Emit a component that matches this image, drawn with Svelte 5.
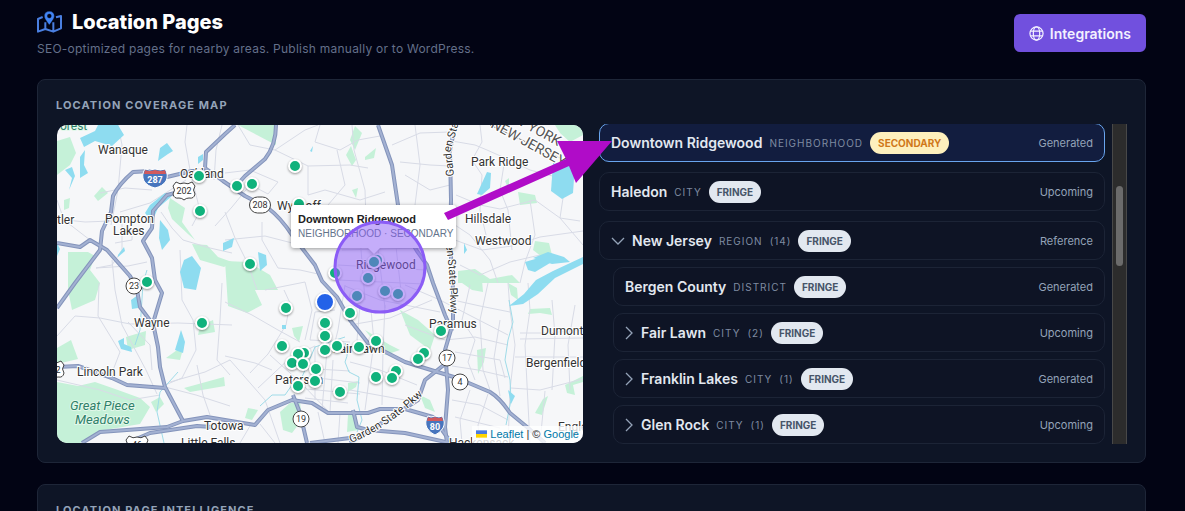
<script>
  const locations = [
    { name: "Downtown Ridgewood", kind: "Neighborhood", tier: "Secondary", status: "Generated", active: true },
    { name: "Haledon", kind: "City", tier: "Fringe", status: "Upcoming" },
    {
      name: "New Jersey",
      kind: "Region",
      count: 14,
      tier: "Fringe",
      status: "Reference",
      open: true,
      children: [
        { name: "Bergen County", kind: "District", tier: "Fringe", status: "Generated" },
        { name: "Fair Lawn", kind: "City", count: 2, tier: "Fringe", status: "Upcoming" },
        { name: "Franklin Lakes", kind: "City", count: 1, tier: "Fringe", status: "Generated" },
        { name: "Glen Rock", kind: "City", count: 1, tier: "Fringe", status: "Upcoming" },
      ],
    },
  ];

  const pins = [
    [295, 166], [199, 176], [237, 186], [252, 184], [200, 211], [299, 204], [250, 264], [147, 282],
    [202, 323], [286, 308], [335, 273], [350, 313], [325, 323], [325, 336], [325, 350], [337, 346],
    [359, 347], [376, 341], [282, 346], [304, 353], [298, 354], [292, 363], [303, 364], [316, 369],
    [315, 381], [298, 386], [340, 392], [376, 377], [396, 371], [392, 378], [424, 353], [418, 359],
    [441, 331], [377, 260], [374, 262], [368, 278], [357, 296], [385, 291], [398, 294],
  ];

  const highways = [
    "M235 125L225 134L206 152L205 168L223 181L245 196L268 208Q281 218 292 235L315 265L322 281L337 297L350 320L368 343L405 362L457 378L490 392Q500 398 510 413L527 427L545 443",
    "M205 171L192 171L167 177L150 171L133 172Q119 184 113 196L111 212L102 231L100 250L75 283L57 308",
    "M276 125Q276 145 265 159L245 176L235 187",
    "M183 191L167 195L153 211L152 228L143 241L152 258L155 280L162 293L153 323L158 347L160 367L165 387L183 421",
    "M57 243L80 247L90 240L107 250L130 276L137 290L140 307L152 323",
    "M57 367L78 366L112 378L127 385L165 388",
    "M82 443L100 432L167 427L183 421L207 417L255 425L268 410L292 400L312 403L328 413L368 413L380 409L405 409L433 417L447 437L452 443",
    "M127 443L150 433L197 426L212 427",
    "M293 395L300 413L307 443",
    "M353 410L357 427L368 430L405 433L450 443",
    "M310 443L358 437",
    "M378 125L392 165L398 205L405 232L417 251L427 265L433 283L445 315L452 331",
    "M455 125L450 151L451 200L450 240L453 290L453 323L445 350L448 390L445 427L447 443",
    "M445 364L425 380L418 400L350 443",
  ];

  const streets = [
    "M118 125L122 145L118 190L111 225",
    "M57 219L85 222L111 221",
    "M100 193L125 188L152 190",
    "M120 212L150 203L186 180",
    "M187 125L185 142L190 170L200 211L192 226",
    "M57 200L64 220L90 240",
    "M161 212L172 228L183 240L210 248L232 253",
    "M115 243L132 240L132 222",
    "M122 224L122 250L112 265L96 268",
    "M96 268L128 266L147 262",
    "M99 283L98 316L120 352L110 378",
    "M112 260L115 290L122 325L146 370L157 394",
    "M57 336L75 316L100 318L130 324L178 323L232 325",
    "M128 322L150 345L152 370",
    "M165 385L182 378L196 350L193 320L182 300L180 250",
    "M165 387L196 395L230 406",
    "M170 382L205 372L230 360",
    "M197 365L203 395L210 415",
    "M222 283L220 320L217 360L230 375",
    "M215 226L232 207L250 185",
    "M225 173L250 170L278 182L268 194L245 182",
    "M238 125L250 145L275 150L305 130L318 125",
    "M275 150L308 166L350 165L368 168",
    "M308 166L308 195L325 190L360 200L385 192",
    "M320 125L315 142L340 150L358 140L380 136",
    "M352 125L354 150L365 190L366 220",
    "M337 150L345 185L328 205",
    "M225 240L265 236L300 245L315 265",
    "M225 212L235 238L248 264L257 290",
    "M262 222L262 240L278 268L300 270L318 274",
    "M225 302L252 315L278 330L300 342",
    "M284 290L290 303L286 325L268 354L250 373",
    "M265 290L305 282L312 310L305 340",
    "M225 356L255 363L272 370",
    "M270 355L300 382L330 413",
    "M258 388L290 358L315 346",
    "M315 346L315 400", "M327 350L322 410", "M333 360L330 412", "M300 368L350 371",
    "M310 377L360 383", "M306 389L360 394", "M305 398L348 403",
    "M345 285L338 330L333 350", "M360 305L357 340L380 352", "M371 310L374 342L365 410",
    "M335 310L315 312L310 340L350 342", "M385 305L383 350L382 405",
    "M350 325L390 318L432 300", "M345 286L380 300L440 312",
    "M350 362L380 370L417 385", "M350 390L405 400",
    "M360 237L365 300", "M376 232L385 308", "M395 238L402 300",
    "M342 250L420 248", "M338 265L425 270", "M338 280L424 284",
    "M400 162L430 165L450 166", "M392 145L420 133L450 132",
    "M452 141L475 145L487 150L505 158L530 170L560 178",
    "M456 195L480 205L500 209L535 200L560 218L580 221",
    "M480 125L482 142L472 160L482 175L480 210L488 243",
    "M505 158L500 190L508 210L512 250",
    "M455 240L482 250L512 246L540 237L583 231",
    "M530 200L535 235L525 262L520 283",
    "M558 181L563 198L560 218L583 245",
    "M455 225L470 235L490 260L498 283",
    "M460 265L480 275L510 262L540 255",
    "M405 325L445 340L475 337L508 345", "M405 285L440 300L508 335",
    "M453 300L480 306L510 312", "M470 285L462 320L475 340L468 362L475 380",
    "M488 283L480 320L483 370L490 390", "M500 320L494 358L500 396",
    "M455 352L500 360L505 378", "M452 366L478 370L508 377",
    "M508 283L510 310L515 345L510 390L508 443",
    "M520 333L545 333L583 330", "M520 339L583 338", "M528 283L530 310L525 345L530 443",
    "M552 300L555 335L552 390", "M515 357L583 357", "M575 305L568 345L570 390",
    "M511 388L540 390L583 379", "M545 391L540 443", "M452 400L480 405L508 420",
    "M470 390L460 420L462 443", "M488 394L478 425L480 443", "M455 417L500 428",
    "M230 360L265 400L280 443", "M318 412L325 443", "M340 413L338 443",
    "M240 443L250 426", "M260 424L275 443", "M57 380L100 390L130 400L160 395",
    "M222 125L216 150L214 180", "M405 175L430 190L450 185", "M415 125L420 165L415 205",
  ];

  const parks = [
    "M57 141L70 137L76 153L70 165L57 175Z",
    "M68 252L88 252L95 256L90 270L100 283L95 300L72 310L68 290Z",
    "M57 382L78 386L95 382L118 390L140 398L150 407L140 424L105 430L80 443L57 443Z",
    "M57 348L71 340L78 359L57 364Z",
    "M170 198L185 208L182 222L195 240L188 234L172 219L168 208Z",
    "M192 244L207 245L218 257L232 262L224 267L200 260Z",
    "M225 261L248 262L270 275L278 290L255 290L262 305L247 313L228 306Z",
    "M238 125L276 125L276 145Z",
    "M166 358L184 345L180 360Z",
    "M94 196L102 187L108 193L98 201Z",
    "M64 200L70 198L69 208L64 210Z",
    "M200 326L213 320L215 332L198 335Z",
    "M184 388L224 377L225 386L190 392Z",
    "M126 337L146 331L145 345L128 350Z",
    "M151 402L160 397L164 404L156 412Z",
    "M355 126L362 133L355 150L350 140Z",
    "M346 155L351 146L356 160L352 166Z",
    "M365 157L376 148L374 158L365 160Z",
    "M352 190L358 188L356 198Z",
    "M518 192L535 195L537 203L520 205Z",
    "M535 241L549 243L553 259L546 260L533 250Z",
    "M505 181L509 178L509 190Z",
    "M458 271L475 269L490 279L512 275L520 283L458 283Z",
    "M400 310L418 320L435 335L430 350L410 335Z",
    "M477 350L486 348L484 362L478 374Z",
    "M530 309L550 308L552 315L540 313L528 314Z",
    "M508 283L517 288L518 300L511 295Z",
    "M565 385L583 376L583 382L573 385L575 395L567 393Z",
    "M543 399L548 396L542 415L535 413Z",
    "M290 403L300 402L302 420L292 433L283 430L280 412Z",
    "M348 415L356 415L358 430L347 432Z",
    "M365 330L390 345L400 350L385 355Z",
    "M248 408L258 410L252 420L245 418Z",
    "M462 283L482 280L483 292L472 290Z",
    "M420 395L430 400L435 412L425 408Z",
    "M555 125L583 125L583 135L570 142L560 133Z",
    "M292 328L303 326L299 342L294 336Z",
    "M348 383L358 381L356 387L348 392Z",
  ];

  const lakes = [
    "M80 138L95 131L98 125L118 125L124 135L112 146L95 141L84 147Z",
    "M65 170L72 167L75 176L69 190L72 178Z",
    "M80 157L85 150L84 165L88 173L80 178Z",
    "M158 161L160 148L167 143L173 151L168 154Z",
    "M150 205L165 193L172 196L158 208L152 222L145 213Z",
    "M160 220L168 230L170 240L162 250L159 238Z",
    "M184 260L192 256L201 268L196 290L184 288L180 272Z",
    "M198 157L203 154L203 160L198 164Z",
    "M118 255L124 247L125 251L118 257Z",
    "M258 252L266 255L267 265L260 271Z",
    "M223 243L234 238L232 247L223 251Z",
    "M118 341L124 338L124 344L131 347L132 352L121 349Z",
    "M181 330L185 342L183 353L175 350Z",
    "M487 172L491 173L490 188L482 195L477 194Z",
    "M553 163L575 164L573 193L562 199L551 191Z",
    "M464 243L467 250L464 254Z",
    "M524 294L536 280L553 271L583 257L583 264L555 278L538 294L523 304L509 306Z",
    "M57 243L60 249L57 256Z",
    "M525 262L552 254L555 260L535 272L528 270Z",
    "M533 258L548 252L564 257L570 262L552 264Z",
    "M508 390L515 396L511 404Z",
    "M282 325L286 325L286 329L282 329Z",
    "M310 151L313 146L312 152Z",
    "M131 300L138 295L138 308L132 309Z",
  ];

  const creeks = [
    "M345 343Q350 350 345 362L349 372L359 377L357 400L362 420L357 432",
    "M260 406L272 395L285 395L292 385L302 377L315 347L345 337",
    "M509 300L513 322L508 340L505 360L510 380L511 400L506 425",
    "M147 270L143 283L140 330L135 345",
    "M178 372L160 392L157 412L164 443",
  ];

  const places = [
    ["Wanaque", 98, 154], ["Oakland", 180, 178], ["Wyckoff", 277, 210], ["Park Ridge", 471, 166],
    ["Hillsdale", 465, 223], ["Westwood", 475, 245], ["Pompton", 105, 223], ["Lakes", 113, 235],
    ["tler", 57, 224], ["Wayne", 134, 327], ["Lincoln Park", 77, 376], ["Totowa", 204, 430],
    ["Little Falls", 181, 447], ["Paterson", 275, 384], ["Fair Lawn", 333, 353], ["Paramus", 429, 328],
    ["Dumont", 541, 335], ["Bergenfield", 526, 367], ["Ridgewood", 356, 269], ["Hackensack", 449, 447],
    ["Englewood", 558, 431],
  ];

  const shields = [
    { label: "208", x: 260, y: 205, w: 21 },
    { label: "23", x: 134, y: 286, w: 16 },
    { label: "17", x: 447, y: 358, w: 16 },
    { label: "4", x: 460, y: 382, w: 16 },
    { label: "19", x: 301, y: 419, w: 16 },
  ];
</script>

{#snippet row(place)}
  <button class="row" class:active={place.active}>
    {#if place.open}
      <svg class="chevron open" viewBox="0 0 14 14" aria-hidden="true">
        <path d="M1 4L7 10L13 4" />
      </svg>
    {:else if place.count}
      <svg class="chevron" viewBox="0 0 9 14" aria-hidden="true">
        <path d="M1 1L7 7L1 13" />
      </svg>
    {/if}
    <span class="name">{place.name}</span>
    <span class="kind">{place.kind}</span>
    {#if place.count}<span class="count">({place.count})</span>{/if}
    <span class="tier {place.tier.toLowerCase()}">{place.tier}</span>
    <span class="status">{place.status}</span>
  </button>
{/snippet}

<main>
  <header>
    <div>
      <h1>
        <svg class="logo" viewBox="0 0 75 66" aria-hidden="true">
          <path class="fold" d="M17 18L3 24V62L25 54L49 62L72 52V15L57 19M25 34V54M49 34V62" />
          <path class="pin" fill-rule="evenodd" d="M37 1C28 1 22 7 22 15C22 24 32 34 37 42C42 34 52 24 52 15C52 7 46 1 37 1ZM37 9A6 6 0 1 1 37 21A6 6 0 1 1 37 9Z" />
        </svg>
        Location Pages
      </h1>
      <p>SEO-optimized pages for nearby areas. Publish manually or to WordPress.</p>
    </div>
    <button class="integrations">
      <svg viewBox="0 0 16 16" aria-hidden="true">
        <circle cx="8" cy="8" r="7" />
        <ellipse cx="8" cy="8" rx="3.400" ry="7" />
        <path d="M1.700 5.400H14.300M1.700 10.600H14.300" />
      </svg>
      Integrations
    </button>
  </header>

  <section class="card">
    <h2>Location Coverage Map</h2>
    <div class="coverage">
      <div class="map">
        <svg viewBox="57 125 526 318" preserveAspectRatio="xMidYMid slice" role="img" aria-label="Location coverage map">
          <rect x="0" y="0" width="700" height="600" fill="#f6f7f9" />
          {#each parks as d}<path class="park" {d} />{/each}
          {#each streets as d}<path class="street" {d} />{/each}
          {#each creeks as d}<path class="creek" {d} />{/each}
          {#each lakes as d}<path class="lake" {d} />{/each}
          {#each highways as d}<path class="highway" {d} />{/each}
          {#each highways as d}<path class="highway inner" {d} />{/each}

          <path class="border" d="M490 125L560 158L583 172" />
          <path id="parkway-north" d="M454 176L451 150L462 112" fill="none" />
          <path id="parkway-mid" d="M446 245L449 270L451 325" fill="none" />
          <path id="parkway-south" d="M351 443Q385 430 424 394" fill="none" />
          <path id="state-ny" d="M497 113L583 160" fill="none" />
          <path id="state-nj" d="M490 127L583 178" fill="none" />
          <text class="road"><textPath href="#parkway-north">Garden State</textPath></text>
          <text class="road"><textPath href="#parkway-mid">en State Pkwy</textPath></text>
          <text class="road"><textPath href="#parkway-south">Garden State Pkwy</textPath></text>
          <text class="state"><textPath href="#state-ny">NEW YORK</textPath></text>
          <text class="state"><textPath href="#state-nj">NEW JERSEY</textPath></text>

          <text class="nature" x="60" y="130">orest</text>
          <text class="nature meadow" x="70" y="410">Great Piece</text>
          <text class="nature meadow" x="75" y="424">Meadows</text>
          {#each places as [name, x, y]}<text class="place" {x} {y}>{name}</text>{/each}

          {#each shields as s}
            <rect class="shield" x={s.x - s.w / 2} y={s.y - 8} width={s.w} height="16" rx="8" />
            <text class="number" x={s.x} y={s.y + 3}>{s.label}</text>
          {/each}
          {#each [[184, 191, "202"], [137, 445, "46"], [53, 370, "202"]] as [x, y, label]}
            <g transform="translate({x} {y})">
              <path class="shield" d="M-8 -9Q-4 -6 0 -8Q4 -6 8 -9L11 -5Q8 -1 11 3Q10 8 5 7Q2 7 0 9Q-2 7 -5 7Q-10 8 -11 3Q-8 -1 -11 -5Z" />
              <text class="number" y="3">{label}</text>
            </g>
          {/each}
          {#each [[155, 178, "287", 12], [435, 425, "80", 9]] as [x, y, label, r]}
            <g transform="translate({x} {y})">
              <path class="interstate" d="M{-r + 2} -9Q{-r / 2} -7 0 -9Q{r / 2} -7 {r - 2} -9Q{r + 2} -3 {r - 1} 3Q{r - 4} 8 0 10Q{-r + 4} 8 {-r + 1} 3Q{-r - 2} -3 {-r + 2} -9Z" />
              <path d="M{-r + 2} -8Q{-r / 2} -6 0 -8Q{r / 2} -6 {r - 2} -8L{r - 1} -4H{-r + 1}Z" fill="#d05a5e" />
              <text class="number light" y="5">{label}</text>
            </g>
          {/each}

          <g class="pins">
            {#each pins as [cx, cy]}<circle {cx} {cy} r="6" />{/each}
            <circle class="home" cx="325" cy="302" r="9" />
          </g>

          <g class="tooltip">
            <path d="M294 205H453Q456 205 456 208V245Q456 248 453 248H380L374 254L368 248H294Q291 248 291 245V208Q291 205 294 205Z" />
            <text class="title" x="298" y="223">Downtown Ridgewood</text>
            <text class="meta" x="298" y="237">NEIGHBORHOOD · SECONDARY</text>
          </g>
          <circle class="area" cx="380" cy="267" r="45" />
        </svg>
        <div class="attribution">
          <svg viewBox="0 0 12 8" aria-hidden="true">
            <path fill="#4c7be1" d="M0 0H12V4H0Z" />
            <path fill="#ffd500" d="M0 4H12V8H0Z" />
          </svg>
          <a href="#leaflet">Leaflet</a> | © <a href="#google">Google</a>
        </div>
      </div>

      <div class="panel">
        <div class="list">
          {#each locations as place}
            <div class="group">
              {@render row(place)}
              {#if place.children}
                <div class="children">
                  {#each place.children as child}{@render row(child)}{/each}
                </div>
              {/if}
            </div>
          {/each}
        </div>
        <div class="scrollbar"><div class="thumb"></div></div>
      </div>

      <svg class="arrow" viewBox="443 141 168 79" aria-hidden="true">
        <path d="M443 213L565 159L556 141L611 141L575 183L568 166L447 220Z" />
      </svg>
    </div>
  </section>

  <section class="card">
    <h2>Location Page Intelligence</h2>
  </section>
</main>

<style>
  :global(body) {
    margin: 0;
    background: #020414;
  }

  main {
    display: flex;
    flex-direction: column;
    height: 100vh;
    box-sizing: border-box;
    overflow: hidden;
    padding: 9px 39px 0 37px;
    font-family: Inter, "Liberation Sans", sans-serif;
    color: #e2e8f0;
  }

  header {
    display: flex;
    flex-shrink: 0;
    justify-content: space-between;
    align-items: flex-start;
    height: 70px;
  }

  h1 {
    display: flex;
    align-items: center;
    gap: 10px;
    margin: 0;
    font-size: 20px;
    line-height: 26px;
    font-weight: 800;
    color: #fff;
  }

  .logo {
    width: 25px;
    height: 22px;
  }

  .fold {
    fill: none;
    stroke: #4a7fe0;
    stroke-width: 6;
    stroke-linejoin: round;
  }

  .pin {
    fill: #4285f4;
    stroke: #020414;
    stroke-width: 1;
  }

  header p {
    margin: 5px 0 0;
    font-size: 12px;
    line-height: 18px;
    letter-spacing: 0.02em;
    color: #64708a;
  }

  button {
    font-family: inherit;
    cursor: pointer;
  }

  .integrations {
    display: flex;
    align-items: center;
    gap: 6px;
    height: 38px;
    margin-top: 5px;
    padding: 0 15px;
    border: none;
    border-radius: 6px;
    background: #7150de;
    color: #f3f0ff;
    font-size: 14px;
    font-weight: 600;
  }

  .integrations svg {
    width: 15px;
    height: 15px;
    fill: none;
    stroke: currentColor;
    stroke-width: 1.300;
  }

  .card {
    flex-shrink: 0;
    margin-bottom: 21px;
    padding: 18px;
    border: 1px solid #1e2638;
    border-radius: 8px;
    background: #0e1526;
  }

  h2 {
    margin: 0;
    font-size: 11px;
    line-height: 14px;
    font-weight: 700;
    letter-spacing: 0.1em;
    text-transform: uppercase;
    color: #94a3b8;
  }

  .coverage {
    position: relative;
    display: grid;
    grid-template-columns: 1fr 1fr;
    gap: 15px;
    margin-top: 12px;
    height: 320px;
  }

  .map {
    position: relative;
    margin: 1px;
    border-radius: 10px;
    overflow: hidden;
  }

  .map > svg {
    display: block;
    width: 100%;
    height: 100%;
  }

  .park {
    fill: #c5f1d8;
  }

  .lake {
    fill: #8edcf0;
  }

  .street,
  .creek,
  .highway,
  .border {
    fill: none;
    stroke: #d8dbe6;
    stroke-width: 1;
    stroke-linejoin: round;
  }

  .creek {
    stroke: #9fdbe8;
  }

  .highway {
    stroke: #8494bb;
    stroke-width: 4;
  }

  .highway.inner {
    stroke: #a3b1d2;
    stroke-width: 2;
  }

  .border {
    stroke: #888;
    stroke-dasharray: 3 1;
  }

  .place,
  .road,
  .state,
  .nature,
  .number {
    font-family: Roboto, sans-serif;
    font-size: 12px;
    fill: #333;
    paint-order: stroke;
    stroke: #fff;
    stroke-width: 2;
  }

  .road {
    font-size: 11px;
  }

  .state {
    font-size: 14px;
    fill: #555;
  }

  .nature {
    fill: #2f8069;
    stroke: #e2f8ea;
  }

  .meadow {
    font-size: 13px;
    font-style: italic;
  }

  .shield {
    fill: #fff;
    stroke: #444;
    stroke-width: 1;
  }

  .number {
    font-size: 9px;
    text-anchor: middle;
    stroke: none;
  }

  .interstate {
    fill: #4775bd;
    stroke: #fff;
    stroke-width: 1;
  }

  .light {
    fill: #fff;
    font-weight: 700;
  }

  .pins circle {
    fill: #10b27c;
    stroke: #fff;
    stroke-width: 2;
    filter: drop-shadow(0 1px 1px rgba(0, 0, 0, 0.4));
  }

  .pins .home {
    fill: #2462e8;
  }

  .tooltip path {
    fill: #fff;
    filter: drop-shadow(0 1px 2px rgba(0, 0, 0, 0.4));
  }

  .tooltip text {
    font-family: "Liberation Sans", Arial, sans-serif;
    font-size: 11px;
    font-weight: 700;
    fill: #222;
  }

  .tooltip .meta {
    font-size: 10px;
    font-weight: 400;
    fill: #64748b;
  }

  .area {
    fill: rgba(139, 92, 246, 0.5);
    stroke: #8b5cf6;
    stroke-width: 3;
  }

  .attribution {
    position: absolute;
    right: 0;
    bottom: 0;
    padding: 0 4px;
    background: rgba(255, 255, 255, 0.8);
    color: #333;
    font-family: "Liberation Sans", Arial, sans-serif;
    font-size: 11px;
    line-height: 17px;
  }

  .attribution svg {
    width: 11px;
    height: 8px;
  }

  .attribution a {
    color: #0078a8;
    text-decoration: none;
  }

  .panel {
    display: flex;
    gap: 7px;
    min-width: 0;
    height: 320px;
  }

  .list {
    flex: 1;
    min-width: 0;
    overflow: hidden;
  }

  .group {
    margin: -1px 0 11px;
  }

  .row {
    display: flex;
    align-items: center;
    gap: 7px;
    box-sizing: border-box;
    width: 100%;
    height: 39px;
    padding: 0 11px;
    border: 1px solid #1c2436;
    border-radius: 10px;
    background: #0e1425;
    white-space: nowrap;
  }

  .row.active {
    border-color: #69a5ee;
    background: #121d3f;
  }

  .children {
    display: flex;
    flex-direction: column;
    gap: 7px;
    padding: 7px 0 0 14px;
  }

  .chevron {
    width: 9px;
    height: 14px;
    fill: none;
    stroke: #94a3b8;
    stroke-width: 1.300;
  }

  .chevron.open {
    width: 14px;
  }

  .name {
    font-size: 14px;
    font-weight: 600;
    color: #e2e8f0;
  }

  .kind,
  .count {
    font-size: 10px;
    letter-spacing: 0.1em;
    text-transform: uppercase;
    color: #7f8ba1;
  }

  .tier {
    padding: 0 8px;
    border-radius: 11px;
    background: #e2e8f0;
    color: #475569;
    font-size: 10px;
    line-height: 22px;
    font-weight: 700;
    text-transform: uppercase;
  }

  .tier.secondary {
    background: #fef0bd;
    color: #d0781a;
  }

  .status {
    margin-left: auto;
    font-size: 11px;
    color: #94a3b8;
  }

  .scrollbar {
    box-sizing: border-box;
    width: 15px;
    padding: 62px 3px 0;
    border: 1px solid #484848;
    border-width: 0 1px;
    background: #2c2c2c;
  }

  .thumb {
    height: 80px;
    border-radius: 4px;
    background: #6b6b6b;
  }

  /* callout pointing from the map tooltip to the selected row */
  .arrow {
    position: absolute;
    top: 17px;
    left: calc(50% - 148px);
    width: 168px;
    height: 79px;
    fill: #b00cc8;
    pointer-events: none;
  }
</style>
